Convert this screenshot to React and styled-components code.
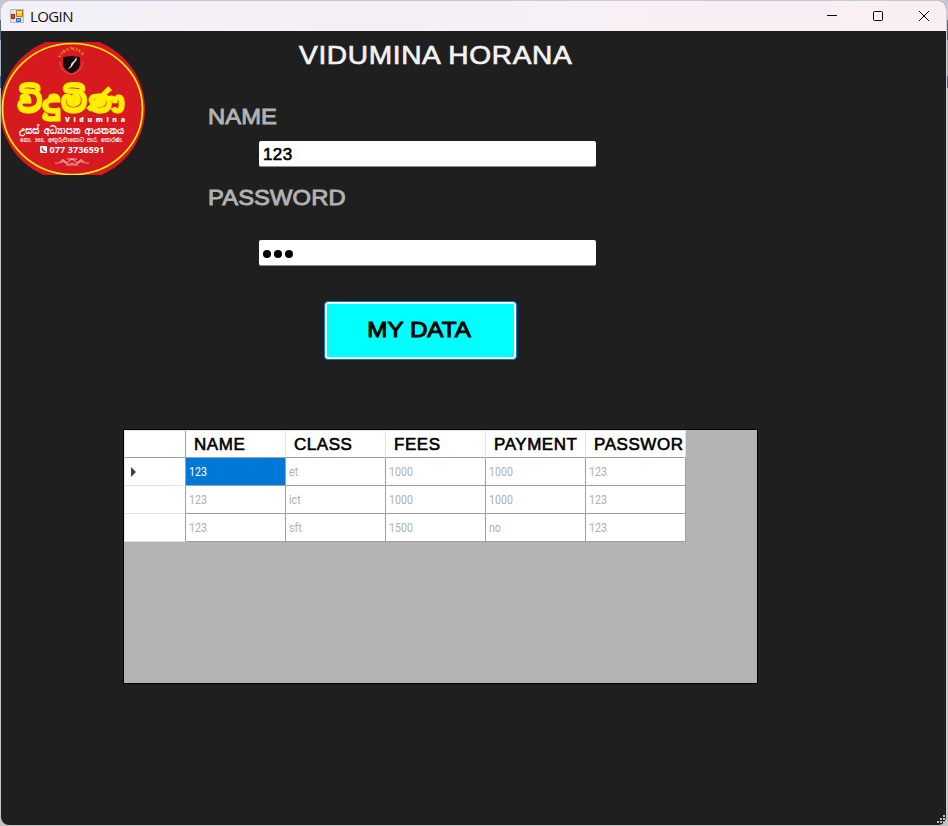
import React from 'react';
import styled, { createGlobalStyle } from 'styled-components';

const GlobalStyle = createGlobalStyle`
  * { box-sizing: border-box; }
  body {
    margin: 0;
    background: linear-gradient(#c3c9da 0 20px, #56617c 20px 40px, #a9b1c0 40px 76px, #34699c 76px 88px, #c4c4c4 88px);
    font-family: "Liberation Sans", Arial, sans-serif;
    overflow: hidden;
  }
`;

const Window = styled.main`
  width: 946px;
  height: 824px;
  margin: 1px;
  border-right: 1px solid #cfcfd2;
  border-radius: 8px;
  background: #1f1f1f;
  overflow: hidden;
  display: flex;
  flex-direction: column;
`;

const TitleBar = styled.header`
  height: 30px;
  flex: none;
  display: flex;
  align-items: center;
  margin-right: -1px;
  padding-left: 9px;
  background: linear-gradient(90deg, #f3f0f7, #f9eff3);
`;

const Title = styled.span`
  flex: 1;
  margin-left: 6px;
  padding-bottom: 1px;
  font: 15px "Open Sans", sans-serif;
  letter-spacing: -0.6px;
  color: #111;
`;

const WindowButton = styled.button`
  width: 46px;
  height: 30px;
  padding: 0;
  border: 0;
  background: none;
  display: grid;
  place-items: center;
`;

const Body = styled.div`
  flex: 1;
  display: flex;
  flex-direction: column;
`;

const Top = styled.div`
  display: flex;
  height: 398px;
`;

const Logo = styled.svg`
  width: 145px;
  height: 133px;
  margin-top: 11px;
  flex: none;
`;

const Form = styled.form`
  width: 390px;
  margin-left: 62px;
  display: flex;
  flex-direction: column;
`;

const Heading = styled.h1`
  margin: 8px 0 0 91px;
  font-size: 26px;
  line-height: 32px;
  font-weight: 400;
  letter-spacing: 0.6px;
  white-space: nowrap;
  color: #f2f2f2;
  -webkit-text-stroke: 0.7px #f2f2f2;
  transform: scaleX(1.08);
  transform-origin: left;
`;

const Label = styled.label`
  margin-top: ${(p) => p.$gap}px;
  height: 28px;
  font-size: 22px;
  line-height: 29px;
  letter-spacing: 0.1px;
  color: #b2b2b2;
  -webkit-text-stroke: 0.9px #b2b2b2;
  transform: scaleX(1.08);
  transform-origin: left;
`;

const Field = styled.div`
  display: flex;
  align-items: center;
  width: 337px;
  height: 26px;
  margin: ${(p) => p.$gap}px 0 0 51px;
  padding: 2px 4px 0;
  border-bottom: 1px solid #8c8c8c;
  border-radius: 2px;
  background: #fff;
  color: #000;
  font-size: 17px;
  letter-spacing: 0.4px;
  -webkit-text-stroke: 0.6px #000;
`;

const Dots = styled.span`
  display: flex;
  gap: 3px;
  margin-top: 1px;
`;

const Dot = styled.i`
  width: 8px;
  height: 8px;
  border-radius: 50%;
  background: #000;
`;

const SubmitButton = styled.button`
  width: 193px;
  height: 59px;
  margin: 35px 0 0 116px;
  padding: 0 2px 1px 0;
  border: 1px solid #0078d7;
  border-radius: 4px;
  box-shadow: inset 0 0 0 2px #fff;
  background: #0ff;
  color: #000;
  font: 22px "Liberation Sans", Arial, sans-serif;
`;

const ButtonText = styled.span`
  display: inline-block;
  -webkit-text-stroke: 1px #000;
  transform: scaleX(1.1);
`;

const GridPanel = styled.section`
  width: 635px;
  height: 255px;
  margin-left: 122px;
  border: 1px solid #000;
  background: #b3b3b3;
`;

const Table = styled.div`
  width: 562px;
  border-top: 1px solid #e2e2e2;
`;

const Row = styled.div`
  display: grid;
  grid-template-columns: 62px repeat(5, 100px);
  grid-template-rows: 100%;
  height: ${(p) => (p.$head ? 27 : 28)}px;
`;

const RowHeader = styled.div`
  display: flex;
  align-items: center;
  padding-left: 6px;
  border-left: 1px solid #e5e5e5;
  border-right: 1px solid #a0a0a0;
  border-bottom: 1px solid ${(p) => (p.$dark ? '#a0a0a0' : '#e2e2e2')};
  background: #fff;
`;

const ColumnHeader = styled.div`
  padding-left: 8px;
  border-right: 1px solid #e2e2e2;
  border-bottom: 1px solid #a0a0a0;
  background: #fff;
  color: #000;
  font-size: 17px;
  line-height: 28px;
  letter-spacing: 0.55px;
  white-space: nowrap;
  overflow: hidden;
  -webkit-text-stroke: 0.6px #000;
`;

const Cell = styled.div`
  padding-left: 3px;
  border-right: 1px solid #a0a0a0;
  border-bottom: 1px solid #a0a0a0;
  background: ${(p) => (p.$selected ? '#0078d7' : '#fff')};
  color: ${(p) => (p.$selected ? '#fff' : '#b0b0b0')};
  font: 12.5px/27px Roboto, sans-serif;
`;

const CellText = styled.span`
  display: inline-block;
  transform: scaleX(0.85);
  transform-origin: left;
`;

const SizeGrip = styled.svg`
  width: 8px;
  height: 8px;
  margin: auto 1px 2px auto;
`;

const columns = ['NAME', 'CLASS', 'FEES', 'PAYMENT', 'PASSWOR'];
const rows = [
  ['123', 'et', '1000', '1000', '123'],
  ['123', 'ict', '1000', '1000', '123'],
  ['123', 'sft', '1500', 'no', '123'],
];

function AppIcon() {
  return (
    <svg width="14" height="14" viewBox="0 0 14 14">
      <path d="M.5.5h13v13H.5z" fill="#e2e2e4" stroke="#b9b9bc" />
      <path d="M6.5 1.500h6v6h-6z" fill="#fbc83c" stroke="#b67a09" />
      <path d="M7 2h5v2H7z" fill="#ffe38a" />
      <path d="M1.500 5.500h3v4h-3z" fill="#dd4b3c" stroke="#9c1c13" />
      <path d="M6.500 9.500h4v3h-4z" fill="#72b2fa" stroke="#2c68c9" />
    </svg>
  );
}

function Emblem() {
  return (
    <Logo viewBox="1 42 145 133">
      <ellipse cx="72.5" cy="109" rx="72.5" ry="72" fill="#d71920" />
      <ellipse cx="72.5" cy="109" rx="70" ry="65.5" fill="none" stroke="#ffef00" strokeWidth="1.7" />
      <path id="arc" d="M60.500 58a12 11 0 0 1 23 0" fill="none" />
      <text fontSize="4.2" fontWeight="700" fill="#f2c200" fontFamily="Liberation Serif, serif">
        <textPath href="#arc" textLength="27">VIDUMINA</textPath>
      </text>
      <path d="M60 62c1 7 5 11 11 12 7-1 11-5 12-12" fill="none" stroke="#e77a73" strokeWidth="1" strokeDasharray="1 .6" />
      <path d="M63 57l8.500-1 8.500 1v8q-2 6-8.500 8.500Q65 71 63 65z" fill="#130d0e" />
      <path d="M76 57c-1 5-5 5-5 8 0 2-2 2-3 4 5-2 4-4 7-7 2-2 2-3 1-5z" fill="#f4eeee" />
      <text x="17" y="112.500" textLength="108" lengthAdjust="spacingAndGlyphs" fontSize="31" fontWeight="900" fill="#ffef00" stroke="#ffef00" strokeWidth="1" fontFamily="Noto Sans Sinhala, Noto Sans, sans-serif">විදුමිණ</text>
      <text x="65" y="121.500" textLength="60" fontSize="7" fontWeight="800" fill="#fff" fontFamily="Open Sans, sans-serif">Vidumina</text>
      <g fill="#fff" fontFamily="Noto Sans Sinhala, Noto Sans, sans-serif">
        <text x="19" y="133.500" textLength="105" lengthAdjust="spacingAndGlyphs" fontSize="10" fontWeight="700">උසස් අධ්‍යාපන ආයතනය</text>
        <text x="20" y="142" textLength="103" lengthAdjust="spacingAndGlyphs" fontSize="6" fontWeight="600">නො. 360, අඟුරුවාතොට පාර, හොරණ.</text>
      </g>
      <rect x="40" y="146" width="7" height="7" rx="1" fill="#fff" />
      <path d="M42 147.500q0 3.500 3.500 4" fill="none" stroke="#d71920" strokeWidth="1.300" />
      <text x="49.500" y="153" textLength="55" fontSize="9" fontWeight="700" fill="#fff" fontFamily="Open Sans, sans-serif">077 3736591</text>
      <g fill="none" stroke="#efb3ac" strokeWidth=".9">
        <path d="M55 163q4 1 6-2 2-3 4 0t3 1q4-6 8 0 1 2 3-1t4 0q2 3 6 2" />
        <path d="M60 163q3-3 6 0 3 3 6 0 3 3 6 0 3-3 6 0M67 159h10M69 161l3-2 3 2M66 165h12M62 160l4 3M82 160l-4 3" />
      </g>
    </Logo>
  );
}

export default function App() {
  return (
    <>
      <GlobalStyle />
      <Window>
        <TitleBar>
          <AppIcon />
          <Title>LOGIN</Title>
          <WindowButton aria-label="Minimize">
            <svg width="10" height="10"><path d="M0 4.500h10" stroke="#000" /></svg>
          </WindowButton>
          <WindowButton aria-label="Maximize">
            <svg width="10" height="10"><rect x=".5" y=".5" width="9" height="9" rx="1" fill="none" stroke="#000" /></svg>
          </WindowButton>
          <WindowButton aria-label="Close">
            <svg width="10" height="10"><path d="M0 0l10 10M10 0L0 10" stroke="#000" /></svg>
          </WindowButton>
        </TitleBar>
        <Body>
          <Top>
            <Emblem />
            <Form>
              <Heading>VIDUMINA HORANA</Heading>
              <Label $gap={31}>NAME</Label>
              <Field $gap={11}>123</Field>
              <Label $gap={16}>PASSWORD</Label>
              <Field $gap={29}>
                <Dots><Dot /><Dot /><Dot /></Dots>
              </Field>
              <SubmitButton type="button"><ButtonText>MY DATA</ButtonText></SubmitButton>
            </Form>
          </Top>
          <GridPanel>
            <Table>
              <Row $head>
                <RowHeader $dark />
                {columns.map((name) => <ColumnHeader key={name}>{name}</ColumnHeader>)}
              </Row>
              {rows.map((row, r) => (
                <Row key={r}>
                  <RowHeader>
                    {r === 0 && <svg width="5" height="10"><path d="M0 0l5 5-5 5z" fill="#404040" /></svg>}
                  </RowHeader>
                  {row.map((value, c) => (
                    <Cell key={c} $selected={r === 0 && c === 0}><CellText>{value}</CellText></Cell>
                  ))}
                </Row>
              ))}
            </Table>
          </GridPanel>
          <SizeGrip><path d="M6 0h2v2H6zM3 3h2v2H3zM6 3h2v2H6zM0 6h2v2H0zM3 6h2v2H3zM6 6h2v2H6z" fill="#bdbdbd" /></SizeGrip>
        </Body>
      </Window>
    </>
  );
}
